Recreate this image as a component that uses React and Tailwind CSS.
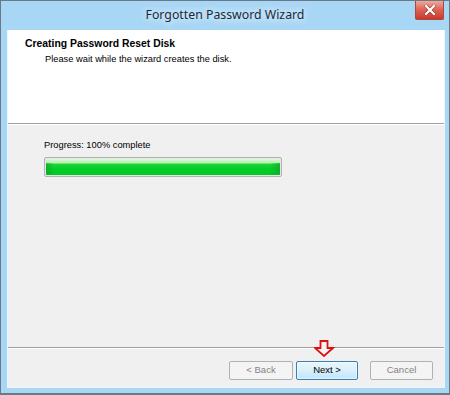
import React from 'react';

const sans = { fontFamily: '"Liberation Sans", Arial, sans-serif' };

const Button = ({ label, width, disabled, focused }) => {
  const cls = focused
    ? 'border-[#3c7fb1] bg-gradient-to-b from-[#eaf6fd] via-[#d9f0fc] to-[#bee6fd] text-black shadow-[inset_0_0_0_1px_#ffffff80]'
    : 'border-[#adb2b5] bg-[#f4f4f4] text-[#838383]';
  return (
    <div
      className={`h-[19px] ${width} flex items-center justify-center rounded-[2px] border text-[9.5px] ${cls}`}
      style={sans}
    >
      {label}
    </div>
  );
};

const CloseButton = () => (
  <div className="h-[20px] w-[29px] mt-[-1px] flex items-center justify-center rounded-b-[2px] border border-t-0 border-[#b3463c] bg-gradient-to-b from-[#f0b0a6] via-[#dc6356] to-[#c8382c]">
    <svg width="12" height="10" viewBox="0 0 12 10">
      <path d="M2 1 L10 9 M10 1 L2 9" stroke="#5a1a14" strokeWidth="3.4" strokeLinecap="square" opacity="0.5" />
      <path d="M2 1 L10 9 M10 1 L2 9" stroke="#ffffff" strokeWidth="2.2" strokeLinecap="square" />
    </svg>
  </div>
);

const ProgressBar = () => (
  <div className="relative h-[20px] w-[238px] rounded-[2px] border border-[#b2b2b2] bg-[#e6e6e6] p-px">
    <div className="relative h-full w-full overflow-hidden rounded-[1px] bg-[linear-gradient(to_bottom,#dcfad8_0%,#b2f1ae_24%,#22d03a_34%,#00d026_60%,#04c625_100%)]">
      <div className="absolute left-0 top-[4px] bottom-0 w-[8px] bg-gradient-to-r from-[#0aa62a] to-transparent opacity-70" />
      <div className="absolute right-0 top-[4px] bottom-0 w-[10px] bg-gradient-to-l from-[#0aa62a] to-transparent opacity-70" />
    </div>
  </div>
);

const Separator = () => (
  <div className="flex flex-col">
    <div className="h-px bg-[#a0a0a0]" />
    <div className="h-px bg-white" />
  </div>
);

export default function App() {
  return (
    <div className="w-[450px] h-[395px] flex flex-col bg-[#a8d6f5] border border-b-2 border-[#6b7987] overflow-hidden">
      {/* title bar */}
      <div className="relative h-[29px] flex items-center justify-center shrink-0">
        <span
          className="text-[12.3px] text-[#1b2a38] [text-shadow:0_0_6px_#e6f4fd,0_0_10px_#e6f4fd]"
          style={{ fontFamily: '"Noto Sans", "Open Sans", sans-serif' }}
        >
          Forgotten Password Wizard
        </span>
        <div className="absolute right-[5px] top-0">
          <CloseButton />
        </div>
      </div>

      {/* client area */}
      <div className="relative flex-1 ml-[6px] mr-[4px] mb-[5px] flex flex-col bg-[#f0f0f0] border border-t-0 border-[#eef6fc]">
        <div className="h-[93px] bg-white pl-[17px] pt-[8px] shrink-0" style={sans}>
          <div className="text-[10.4px] font-bold leading-[12px] text-black">Creating Password Reset Disk</div>
          <div className="mt-[3px] pl-[20px] text-[9.3px] leading-[12px] text-black">
            Please wait while the wizard creates the disk.
          </div>
        </div>
        <Separator />

        <div className="h-[222px] pl-[36px] pt-[15px] shrink-0" style={sans}>
          <div className="text-[9.3px] leading-[11px] text-black">Progress: 100% complete</div>
          <div className="mt-[6px]">
            <ProgressBar />
          </div>
        </div>
        <Separator />

        <div className="flex-1 flex justify-end items-start pt-[12px] pr-[11px]">
          <Button label="< Back" width="w-[64px]" disabled />
          <div className="ml-[3px]">
            <Button label="Next >" width="w-[62px]" focused />
          </div>
          <div className="ml-[12px]">
            <Button label="Cancel" width="w-[63px]" disabled />
          </div>
        </div>

        {/* red pointer arrow */}
        <svg
          className="absolute left-[306px] top-[310px]"
          width="21"
          height="17"
          viewBox="0 0 21 17"
        >
          <path
            d="M6.5 1 H13.5 V8 H19 L10 16 L1 8 H6.5 Z"
            fill="#f4f4f4"
            stroke="#e01010"
            strokeWidth="1.8"
            strokeLinejoin="miter"
          />
        </svg>
      </div>
    </div>
  );
}
